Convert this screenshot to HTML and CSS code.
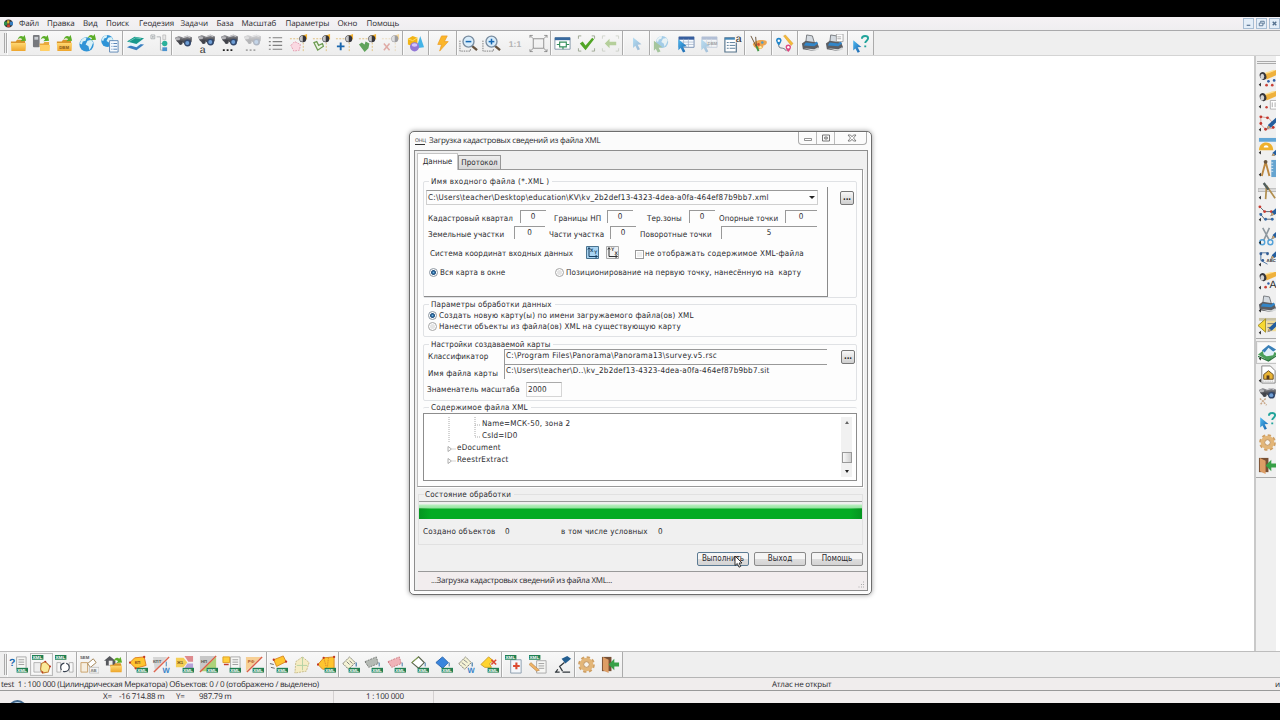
FILE: index.html
```html
<!DOCTYPE html>
<html lang="ru">
<head>
<meta charset="utf-8">
<title>Загрузка кадастровых сведений</title>
<link rel="stylesheet" href="styles.css">
</head>
<body>
<svg class="defs" width="0" height="0">
  <defs>
    <linearGradient id="gold" x1="0" y1="0" x2="0" y2="1"><stop offset="0" stop-color="#ffd873"/><stop offset="1" stop-color="#eda52b"/></linearGradient>
    <linearGradient id="blue" x1="0" y1="0" x2="1" y2="1"><stop offset="0" stop-color="#4db9f2"/><stop offset="1" stop-color="#155da6"/></linearGradient>
    <linearGradient id="dark" x1="0" y1="0" x2="0" y2="1"><stop offset="0" stop-color="#a5a5a9"/><stop offset=".45" stop-color="#55565c"/><stop offset="1" stop-color="#2c2d34"/></linearGradient>
  </defs>
  <symbol id="mk" viewBox="0 0 20 20"><path d="M3 14.500v4L.8 16.500z" fill="#222"/></symbol>
  <symbol id="folderbase" viewBox="0 0 20 20"><path d="M2 8h5l1.500-2H16l1 2v3H2z" fill="#d9952a"/><path d="M2 9.500h16l-.6 8.500H2.500z" fill="url(#gold)"/></symbol>
  <symbol id="garrow" viewBox="0 0 20 20"><path d="M9 6c1-4 4-5 6-3l1.500-2L18 7l-6 .5 1.800-2C12.500 4 11 4 9 6z" fill="#5cae28"/></symbol>
  <symbol id="folder" viewBox="0 0 20 20"><use href="#folderbase"/><use href="#garrow"/></symbol>
  <symbol id="folderphone" viewBox="0 0 20 20"><rect x="1" y="1" width="7" height="13" rx="1" fill="#77797d"/><path d="M2.500 3h4v3h-4z" fill="#c9cdd2"/><path d="M8 10h4l1-1.500h5V18H9z" fill="#e9a93a"/><path d="M8 11.500h11L18.500 18H9z" fill="#ffcf66"/><use href="#garrow"/></symbol>
  <symbol id="folderdbm" viewBox="0 0 20 20"><use href="#folder"/><text x="4.500" y="16" class="it" fill="#835414">DBM</text></symbol>
  <symbol id="globe" viewBox="0 0 20 20"><circle cx="9" cy="11" r="7.500" fill="#2f94d7"/><path d="M3 7c3-4 5-3 6-3l-1 3-3 1-1 3-2-1zM10 7l4-1 2 3-2 5-2 3-1-4-3-2z" fill="#d8f1f7"/></symbol>
  <symbol id="globearrow" viewBox="0 0 20 20"><use href="#globe"/><use href="#garrow" x="1" y="-1"/></symbol>
  <symbol id="globelist" viewBox="0 0 20 20"><g transform="translate(-1 -2) scale(.85)"><use href="#globe" width="20" height="20"/></g><path d="M9 7h9v12H9z" fill="#f7fbff" stroke="#6089b5"/><path d="M11 10h1m1 0h4m-6 3h1m1 0h4m-6 3h1m1 0h4" stroke="#5180b5"/></symbol>
  <symbol id="layers" viewBox="0 0 20 20"><path d="M1 14l8-4 10 1-8 6z" fill="#3a7fc0"/><path d="M1 11l8-4 10 1-8 6z" fill="#e8f4fb"/><path d="M1 8l8-5 10 1.500-8 6z" fill="#18988c"/><path d="M3 8l7-4 6 1" stroke="#66c6b5" fill="none"/></symbol>
  <symbol id="tree" viewBox="0 0 20 20"><path d="M1 1h4v4H1zM2 3h2M3 2v2M7 3h4v14h4M11 10h4" stroke="#9ca3a6" fill="none" stroke-width=".8"/><path d="M13.500 1h3v5h-3z" fill="#e8e8e8" stroke="#aaa" stroke-width=".6"/><circle cx="15.500" cy="10" r="2.800" fill="#2ab19b"/><path d="M13 14h5v4h-5z" fill="#4b93ce"/></symbol>
  <symbol id="binoc" viewBox="0 0 20 20"><path d="M1 4l4-2 4 1.500L14 1.500l5 2-.5 5-5 4-4.500-4-2 2.500L3 8z" fill="url(#dark)"/><ellipse cx="4" cy="5" rx="2.500" ry="1.600" fill="#b4b4b8"/><path d="M9 4l5-1.500 3 1" stroke="#d7d7da" fill="none"/><circle cx="7" cy="9.300" r="2.200" fill="#41434a"/><circle cx="14.300" cy="9.500" r="3.600" fill="#33496d"/><circle cx="14" cy="9.500" r="2.100" fill="#6f9fd6"/></symbol>
  <symbol id="binoca" viewBox="0 0 20 20"><use href="#binoc" y="-1"/><text x="3" y="19.500" class="it big" fill="#333">a</text></symbol>
  <symbol id="binocd" viewBox="0 0 20 20"><use href="#binoc" y="-1"/><path d="M3 17h2m2 0h2m2 0h2" stroke="#222" stroke-width="1.800"/></symbol>
  <symbol id="list" viewBox="0 0 20 20"><path d="M3 4h2m2 0h10M3 8h2m2 0h10M3 12h2m2 0h10M3 16h2m2 0h10" stroke="#808080" stroke-width="1.200"/></symbol>
  <symbol id="sel" viewBox="0 0 20 20"><path d="M1 5h10M15 9v10" stroke="#dfbf7a" stroke-dasharray="2 1.500" fill="none"/><path d="M13 2l6-2v6z" fill="#f3b334"/><circle cx="14.500" cy="5" r="3.700" fill="#34343a"/><path d="M14.500 1.800a3.200 3.200 0 0 0 0 6.400z" fill="#c5c5c8"/></symbol>
  <symbol id="selpoly" viewBox="0 0 20 20"><use href="#sel"/><path d="M2 12l4-4 6 3-1 6-6 1z" fill="#fad9e2" stroke="#e59fb1" stroke-dasharray="2 1"/></symbol>
  <symbol id="selline" viewBox="0 0 20 20"><use href="#sel"/><path d="M2 9l3-1 2 4 4-2 1 3-6 4z" fill="#eef6e5" stroke="#6c9b52" stroke-width="1.300"/></symbol>
  <symbol id="selplus" viewBox="0 0 20 20"><use href="#sel"/><path d="M2 13h8M6 9v8" stroke="#1a66ad" stroke-width="2"/></symbol>
  <symbol id="selheart" viewBox="0 0 20 20"><use href="#sel"/><path d="M1 11l3-2 3 2 1-3 4 2-1 5-4 4z" fill="#60a35c"/></symbol>
  <symbol id="selx" viewBox="0 0 20 20"><g opacity=".45"><use href="#sel"/></g><path d="M3 10l6 7m0-7l-6 7" stroke="#dfaaa5" stroke-width="1.600"/></symbol>
  <symbol id="shapes" viewBox="0 0 20 20"><path d="M2 5l5-3 5 2v7l-5 2-5-2z" fill="#f1b416"/><path d="M2 5l5 2 5-3" stroke="#ffdf66" fill="none"/><path d="M15 2l4 12-8 1z" fill="#44b4e7"/><circle cx="9" cy="13.500" r="4.800" fill="#9277d6"/><ellipse cx="9" cy="11.500" rx="3" ry="1.800" fill="#d3c5ff"/></symbol>
  <symbol id="bolt" viewBox="0 0 20 20"><path d="M9 2h6l-3 6h4L7 18l2-7H5z" fill="#fbb62a" stroke="#eb981c" stroke-width=".7"/></symbol>
  <symbol id="mag" viewBox="0 0 20 20"><path d="M1 7v11h11v-3" fill="none" stroke="#777" stroke-dasharray="1.500 1"/><path d="M13 12l6 5" stroke="#66533f" stroke-width="2.500"/><circle cx="10" cy="8" r="5.800" fill="#d9edfb" stroke="#7a8da0" stroke-width="1.400"/><path d="M7 8h6" stroke="#1769b3" stroke-width="1.600"/></symbol>
  <symbol id="magin" viewBox="0 0 20 20"><use href="#mag"/><path d="M10 5v6" stroke="#1769b3" stroke-width="1.600"/></symbol>
  <symbol id="one" viewBox="0 0 20 20"><text x="3" y="13.500" class="it one" fill="#b3b3b3">1:1</text></symbol>
  <symbol id="fit" viewBox="0 0 20 20"><path d="M4.500 5h11v10h-11zM1 1.500L4.500 5M19 1.500L15.500 5M1 18.500L4.500 15M19 18.500L15.500 15M1 4V1.500h3M16 1.500h3V4M1 16v2.500h3M16 18.500h3V16" stroke="#858585" fill="none" stroke-width=".9"/></symbol>
  <symbol id="win" viewBox="0 0 20 20"><path d="M2 4h16v12H2z" fill="#fff" stroke="#8497a9"/><path d="M2 3.500h16v3H2z" fill="#386a9f"/><path d="M7 8.500h7v5H7zM4 11h3m7 0h3M10.500 13.500v2.500" stroke="#348e5c" fill="none" stroke-width="1.200"/></symbol>
  <symbol id="corners" viewBox="0 0 20 20"><path d="M1.500 5V2h3M15.500 2h3v3M1.500 15v3h3M15.500 18h3v-3" stroke="#9da792" fill="none"/></symbol>
  <symbol id="check" viewBox="0 0 20 20"><use href="#corners"/><path d="M3 10l3-2 3 4 7-8 2 1.500L9 17z" fill="#51a526"/></symbol>
  <symbol id="back" viewBox="0 0 20 20"><use href="#corners" opacity=".4"/><path d="M4 10l5-5v3.200h7v3.600H9V15z" fill="#b5cf9b"/></symbol>
  <symbol id="cursor" viewBox="0 0 20 20"><path d="M3 2l11 9-5 .5 3 6-3 1.500-3-6-3 3z" fill="url(#blue)"/></symbol>
  <symbol id="curpale" viewBox="0 0 20 20"><g transform="translate(4 2) scale(.8)"><use href="#cursor" width="20" height="20" opacity=".4"/></g></symbol>
  <symbol id="curglobe" viewBox="0 0 20 20"><g opacity=".4" transform="translate(3 -1) scale(.85)"><use href="#globe" width="20" height="20"/></g><path d="M2 7l9 7-4 .5 2 4-3 1-2-4-2 2z" fill="#a5c59d"/></symbol>
  <symbol id="table" viewBox="0 0 20 20"><path d="M3 3h16v11H3z" fill="#f9fcff" stroke="#7790b4"/><path d="M3 3h16v3H3z" fill="#375e9e"/><path d="M3 8.500h16M3 11h16M8 5v9m5-9v9" stroke="#9baac2" stroke-width=".7"/></symbol>
  <symbol id="curtable" viewBox="0 0 20 20"><use href="#table"/><g transform="translate(0 4) scale(.82)"><use href="#cursor" width="20" height="20"/></g></symbol>
  <symbol id="curdbm" viewBox="0 0 20 20"><g opacity=".35"><use href="#curtable"/><text x="9" y="12" class="it">DBM</text></g></symbol>
  <symbol id="lista" viewBox="0 0 20 20"><path d="M2 4h12v15H2z" fill="#fff" stroke="#54728a" stroke-width="1.200"/><path d="M2 5h12" stroke="#4387b8" stroke-width="2"/><path d="M4 9h2m1 0h6m-9 3h2m1 0h6m-9 3h2m1 0h6" stroke="#557b98"/><path d="M12.500 0h7v9h-7z" fill="#f2f2f2"/><text x="13.500" y="8" class="it big" fill="#222">a</text></symbol>
  <symbol id="palette" viewBox="0 0 20 20"><path d="M4 11c1-4 8-6 14-4 2 2 0 5-3 5 1 5-8 6-11-1z" fill="#eda650"/><circle cx="10" cy="11" r="1.400" fill="#d14b31"/><circle cx="14" cy="9" r="1.300" fill="#4c9bcb"/><circle cx="12" cy="14" r="1.300" fill="#fff1a0"/><path d="M2 2l6 12M7 3l1 11" stroke="#685136" stroke-width="1"/><path d="M8 13l2 5" stroke="#419744" stroke-width="2"/></symbol>
  <symbol id="route" viewBox="0 0 20 20"><path d="M9 2l2-1 8 9-2 2z" fill="#f4bb38" stroke="#d7972b" stroke-width=".5"/><path d="M4 10c-1 8 5 2 8 8" fill="none" stroke="#67717c"/><path d="M4 12C-.5 7 1 4 4 4s4.500 3 0 8z" fill="#2386c9"/><circle cx="4" cy="7" r="1.300" fill="#fff"/><path d="M14 19c-4.500-5-3-8 0-8s4.500 3 0 8z" fill="#dc4a82"/><circle cx="14" cy="14" r="1.300" fill="#fff"/></symbol>
  <symbol id="printer" viewBox="0 0 20 20"><path d="M6 1l6 1 2 7H5z" fill="#d4dae0" stroke="#5c6064" stroke-width=".8"/><path d="M1 10l4-3 12 2 2 5-5 4-12-2z" fill="#5c5e63"/><path d="M5 9l9 1 2.500-2 1.500 2-4 3-11-1z" fill="#3286c9"/><path d="M3 15l11 1 4-2 1 2-5 2z" fill="#d6d9da"/></symbol>
  <symbol id="printer2" viewBox="0 0 20 20"><use href="#printer"/><path d="M12 0h7v8h-7z" fill="#fff" stroke="#888" stroke-width=".7"/><path d="M13 3h4m-4 2h4" stroke="#888" stroke-width=".7"/></symbol>
  <symbol id="help" viewBox="0 0 20 20"><g transform="translate(0 5) scale(.78)"><use href="#cursor" width="20" height="20"/></g><path d="M11.500 5c0-4 6.500-3.500 6.500-.5 0 2.500-3 2.500-3 5M15 12v2" stroke="#22a49b" fill="none" stroke-width="2"/></symbol>

  <symbol id="tag" viewBox="0 0 20 20"><path d="M8 13.500h12v5H8z" fill="#218052"/><text x="8.600" y="17.700" class="it tagt" fill="#fff">XML</text></symbol>
  <symbol id="tagtop" viewBox="0 0 20 20"><path d="M0 0h12v5H0z" fill="#218052"/><text x=".6" y="4.200" class="it tagt" fill="#fff">XML</text></symbol>
  <symbol id="page" viewBox="0 0 20 20"><path d="M8 2h10v13H8z" fill="#f6f6f4" stroke="#aaa"/><path d="M10 5h6m-6 2.500h6m-6 2.500h6" stroke="#888" stroke-width=".8"/></symbol>
  <symbol id="xq" viewBox="0 0 20 20"><use href="#page"/><text x="0" y="12" class="it q" fill="#1b69ae">?</text><use href="#tag"/></symbol>
  <symbol id="xpoly" viewBox="0 0 20 20"><path d="M2 8h7v10H2z" fill="#eee" stroke="#999" stroke-width=".7"/><path d="M10 9l4-2 5 5-2 6-6 1-2-4z" fill="#fae998" stroke="#bf7d34" stroke-width="1.100"/><g fill="#b92f23"><circle cx="14" cy="7" r="1"/><circle cx="19" cy="12" r="1"/><circle cx="11" cy="18" r="1"/></g><use href="#tagtop"/></symbol>
  <symbol id="xsync" viewBox="0 0 20 20"><use href="#tagtop"/><path d="M2 8h4v10H2zM15 8h4v10h-4z" fill="#f8f8f8" stroke="#999" stroke-width=".7"/><circle cx="10.500" cy="13" r="4.500" fill="#fff" stroke="#384250" stroke-width="1.200" stroke-dasharray="9 2"/></symbol>
  <symbol id="sem" viewBox="0 0 20 20"><text x="0" y="4.500" class="it" fill="#555">SEM</text><path d="M1 8h7v10H1z" fill="#f6eee0" stroke="#c9a16c"/><path d="M8 9l6-5 3 4-6 5z" fill="#fff" stroke="#a18353"/><path d="M10 13h10v6H10z" fill="#f4f4f4" stroke="#aaa" stroke-width=".6"/><text x="11" y="18" class="it" fill="#777">AB</text></symbol>
  <symbol id="homefolder" viewBox="0 0 20 20"><path d="M0 6l6-5 6 5v5H2V6z" fill="#56585d"/><path d="M5 6h4v5H5z" fill="#eee"/><g transform="translate(5 4) scale(.78)"><use href="#folderbase" width="20" height="20"/></g><use href="#garrow" x="1" y="1"/></symbol>
  <symbol id="xkp" viewBox="0 0 20 20"><path d="M1 8l5-5 10-1 2 9-11 3z" fill="#ffc52f" stroke="#de7f20"/><g fill="#c23723"><circle cx="1" cy="8" r="1.200"/><circle cx="16" cy="2" r="1.200"/><circle cx="7" cy="14" r="1.200"/></g><text x="6" y="9" class="it" fill="#83451b">КП</text><use href="#tag"/></symbol>
  <symbol id="kptw" viewBox="0 0 20 20"><path d="M1 2h15L3 16z" fill="#d6d6d6"/><path d="M2 18L18 2" stroke="#df6551" stroke-width="1.500"/><text x="1" y="8" class="it" fill="#555">КПТ</text><path d="M15 7v5" stroke="#4382b7"/><text x="11" y="19" class="it w" fill="#3884ca">W</text></symbol>
  <symbol id="xj" viewBox="0 0 20 20"><path d="M1 3h8l4 5-4 5H1z" fill="#f5cf56"/><path d="M10 1h9v6h-5z" fill="#de8b8e"/><path d="M13 9h6v5h-9z" fill="#b6a3d9"/><text x="2" y="9" class="it" fill="#79571d">Ж1</text><use href="#tag"/></symbol>
  <symbol id="xnp" viewBox="0 0 20 20"><path d="M1 1h16L1 17z" fill="#c8c8c8"/><path d="M18 2v15H2z" fill="#add37a"/><path d="M1 18L18 1" stroke="#db5f46" stroke-width="1.500"/><text x="2" y="8" class="it" fill="#4c5746">НП</text><use href="#tag"/></symbol>
  <symbol id="xdoc" viewBox="0 0 20 20"><use href="#page" x="1"/><path d="M1 2h7v6H1z" fill="#ffcf3d" stroke="#df9f23"/><path d="M2 10h5" stroke="#c53a2b" stroke-width="1.500"/><use href="#tag"/></symbol>
  <symbol id="xrf" viewBox="0 0 20 20"><path d="M1 2h16L1 17z" fill="#f7cf94"/><path d="M2 18L18 2" stroke="#db5f46" stroke-width="1.500"/><text x="3" y="8" class="it" fill="#ae5927">РФ</text><use href="#tag"/></symbol>
  <symbol id="xyel" viewBox="0 0 20 20"><path d="M5 5l10-4 3 6-10 5z" fill="#ffc52f" stroke="#d88a25"/><path d="M1 9l4 1m-3 3l4 1" stroke="#666"/><g fill="#c23723"><circle cx="5" cy="5" r="1.200"/><circle cx="18" cy="7" r="1.200"/></g><use href="#tag"/></symbol>
  <symbol id="palepoly" viewBox="0 0 20 20"><path d="M3 7l7-5 7 6-3 9-12 2z" fill="#f5ecc3" stroke="#c6ba88" stroke-dasharray="2 1"/><path d="M10 2v14m-6-5h11" stroke="#b4d2a4"/></symbol>
  <symbol id="xyel6" viewBox="0 0 20 20"><path d="M1 10l6-7 11-1v12l-12 1z" fill="#ffc52f" stroke="#d88a25"/><path d="M7 3l3 10M12 3l-1 10" stroke="#d1732a" stroke-dasharray="1 1"/><g fill="#c23723"><circle cx="1" cy="10" r="1.200"/><circle cx="18" cy="2" r="1.200"/><circle cx="7" cy="3" r="1.200"/></g><use href="#tag"/></symbol>
  <symbol id="dia" viewBox="0 0 20 20"><path d="M2 9l7-7 6 6-7 7z" fill="#f5f3d5" stroke="#747466" stroke-dasharray="2 .7"/><path d="M16 8v4" stroke="#3975a7" stroke-width="1.200"/></symbol>
  <symbol id="xd1" viewBox="0 0 20 20"><use href="#dia"/><path d="M6 7l3 3m0-4l3 3" stroke="#777"/><use href="#tag"/></symbol>
  <symbol id="xd2" viewBox="0 0 20 20"><path d="M1 7l12-5 2 7-10 4z" fill="#b5bab5" stroke="#747874" stroke-dasharray="2 1"/><path d="M16 8v4" stroke="#3975a7"/><use href="#tag"/></symbol>
  <symbol id="xd3" viewBox="0 0 20 20"><path d="M1 7l12-5 2 7-10 4z" fill="#f0b3b8" stroke="#cd7980" stroke-dasharray="2 1"/><path d="M16 8v4" stroke="#3975a7"/><use href="#tag"/></symbol>
  <symbol id="xd4" viewBox="0 0 20 20"><path d="M2 8l7-6 6 6-6 6z" fill="#fff" stroke="#59634e" stroke-width="1.200"/><path d="M2 8l7-6" stroke="#8aad4c"/><path d="M16 8v4" stroke="#3975a7"/><use href="#tag"/></symbol>
  <symbol id="xd5" viewBox="0 0 20 20"><path d="M2 8l7-6 6 6-6 6z" fill="#3985dd" stroke="#2965ad"/><path d="M16 8v4" stroke="#3975a7"/><use href="#tag"/></symbol>
  <symbol id="xd6" viewBox="0 0 20 20"><use href="#dia"/><path d="M5 8l4 3m-2-6l4 3" stroke="#888"/><text x="11" y="19" class="it w" fill="#3884ca">W</text></symbol>
  <symbol id="xd7" viewBox="0 0 20 20"><path d="M1 10l8-8 5 4-4 3 2 4H5z" fill="#ffd42f" stroke="#cfa025"/><path d="M12 5l5 5m0-5l-5 5" stroke="#dd4530" stroke-width="1.600"/><use href="#tag"/></symbol>
  <symbol id="xmed" viewBox="0 0 20 20"><path d="M6 5h11v14H6z" fill="#f4f7fb" stroke="#8b9dae"/><path d="M12 8v7M8.500 11.500h7" stroke="#dc4b32" stroke-width="2.200"/><use href="#tagtop"/></symbol>
  <symbol id="xpen" viewBox="0 0 20 20"><use href="#page" y="4"/><path d="M2 8l9 8-3 1-8-7z" fill="#efb467" stroke="#a36e35" stroke-width=".5"/><use href="#tagtop"/></symbol>
  <symbol id="micro" viewBox="0 0 20 20"><path d="M9 4l6-3 4 3-6 5z" fill="#245f91"/><path d="M12 8l-5 4 3 5M2 18h5m3 0h8M5 15l-2 3" stroke="#30373c" fill="none" stroke-width="1.300"/></symbol>
  <symbol id="gear" viewBox="0 0 20 20"><circle cx="10" cy="10" r="7.600" fill="none" stroke="#cfa065" stroke-width="2.400" stroke-dasharray="3.400 2.570"/><circle cx="10" cy="10" r="5.200" fill="none" stroke="#e3b678" stroke-width="4"/><circle cx="10" cy="10" r="3" fill="#f6f3ed" stroke="#ba884c"/></symbol>
  <symbol id="exit" viewBox="0 0 20 20"><path d="M1 2h10v15H1z" fill="#765035"/><path d="M2 2l6 3v14l-6-3z" fill="#dd9d65"/><path d="M8 10l6-6v4h5v4h-5v4z" fill="#38a047"/></symbol>

  <symbol id="torch" viewBox="0 0 20 20"><path d="M7 5l12-4 1 5-11 5z" fill="#efb13d"/><path d="M8 4.500l9-3" stroke="#ffe08f" stroke-width="1.500"/><ellipse cx="5.500" cy="7.500" rx="3.400" ry="4.300" transform="rotate(-20 5 8)" fill="#37373c"/><ellipse cx="4.500" cy="8" rx="2" ry="2.900" fill="#d4d4d5"/></symbol>
  <symbol id="torchdots" viewBox="0 0 20 20"><use href="#torch"/><g fill="#c84138"><circle cx="9" cy="17" r="1.400"/><circle cx="15" cy="17" r="1.400"/></g><g fill="#315fa5"><circle cx="11" cy="13" r="1.400"/><circle cx="17" cy="12" r="1.400"/></g></symbol>
  <symbol id="torchpage" viewBox="0 0 20 20"><use href="#torch" y="-1"/><path d="M13 10h8v9h-8z" fill="#fff" stroke="#999" stroke-width=".7"/><path d="M15 12v5m3-5v5" stroke="#aaa"/><circle cx="9" cy="17" r="1.300" fill="#c84138"/></symbol>
  <symbol id="pencil" viewBox="0 0 20 20"><path d="M20 3l-9 8-2 5 5-2 8-8z" fill="#245e9e"/><path d="M9 16l2-4 2 2z" fill="#d4a467"/></symbol>
  <symbol id="editpoly" viewBox="0 0 20 20"><path d="M3 3l8 1 5 6M3 3v8l5 5 9-1" fill="none" stroke="#d69c95"/><g fill="#c4362d"><circle cx="3" cy="3" r="1.500"/><circle cx="10" cy="4" r="1.500"/><circle cx="3" cy="10" r="1.500"/><circle cx="8" cy="16" r="1.500"/><circle cx="16" cy="14" r="1.500"/></g><use href="#pencil"/></symbol>
  <symbol id="protr" viewBox="0 0 20 20"><path d="M1 1h18v4H1z" fill="#62a6d6"/><path d="M1 14c0-11 15-11 15 0z" fill="#eeb12d"/><path d="M6 11c0-3 5-3 5 0z" fill="#fff"/><use href="#pencil" x="5" y="5"/></symbol>
  <symbol id="compass" viewBox="0 0 20 20"><path d="M8 3L4 18M8 3l4 15" stroke="#bc8841" stroke-width="2"/><circle cx="8" cy="3" r="2" fill="#69553c"/><path d="M14 1h5v18h-5z" fill="#66a4d0"/><path d="M14 4h2m-2 3h2m-2 3h2m-2 3h2" stroke="#fff" stroke-width=".7"/></symbol>
  <symbol id="compass2" viewBox="0 0 20 20"><path d="M0 7h20v3H0z" fill="#ddd" stroke="#999" stroke-width=".6"/><path d="M9 4L8 18M9 4l9 13" stroke="#b18e4e" stroke-width="1.800"/><path d="M6 1l5 7" stroke="#525e5c" stroke-width="2.500"/></symbol>
  <symbol id="nodes" viewBox="0 0 20 20"><path d="M2 3l5 5h10M2 10l5 6h9" fill="none" stroke="#586372"/><g fill="#c8392f"><circle cx="2" cy="3" r="1.500"/><circle cx="7" cy="8" r="1.500"/><circle cx="14" cy="8" r="1.500"/></g><g fill="#3469a6"><circle cx="3" cy="11" r="1.500"/><circle cx="8" cy="16" r="1.500"/><circle cx="15" cy="16" r="1.500"/></g><use href="#pencil" x="4" y="-3"/></symbol>
  <symbol id="sciss" viewBox="0 0 20 20"><path d="M5 1l7 13M12 1L6 14" stroke="#8e989f" stroke-width="1.700"/><circle cx="4.500" cy="16" r="2.600" fill="none" stroke="#51a1d8" stroke-width="1.500"/><circle cx="13" cy="16" r="2.600" fill="none" stroke="#51a1d8" stroke-width="1.500"/><use href="#pencil" x="5" y="-3"/></symbol>
  <symbol id="abc" viewBox="0 0 20 20"><path d="M3 4h8M3 4v8l7 4" stroke="#5176a0" fill="none"/><g fill="#305b94"><circle cx="3" cy="5" r="1.500"/><circle cx="10" cy="5" r="1.500"/><circle cx="5" cy="12" r="1.500"/></g><text x="9" y="14" class="it" fill="#333">ABC</text><use href="#pencil" x="4" y="-5"/></symbol>
  <symbol id="torcha" viewBox="0 0 20 20"><use href="#torch" y="-2"/><text x="12" y="17" class="it big" fill="#333">A</text><circle cx="8" cy="16" r="1.400" fill="#c84138"/><circle cx="11" cy="12" r="1.300" fill="#315fa5"/></symbol>
  <symbol id="ytri" viewBox="0 0 20 20"><path d="M1 1h18v3H1z" fill="#c8c2a6"/><path d="M9 4h10v11H9z" fill="#f1dc98"/><path d="M10 7h8m-8 4h8" stroke="#777"/><path d="M0 9l8-7v14z" fill="#f8d831" stroke="#9f8b24"/><use href="#pencil" x="1"/></symbol>
  <symbol id="homemap" viewBox="0 0 20 20"><path d="M0 12l8-6 13 5-10 8z" fill="#4a9e59"/><path d="M0 14l11 5 9-6" fill="none" stroke="#2c7440" stroke-width="1.500"/><path d="M5 8l6-6 7 5-2 6-7 1-3-2z" fill="#e3f0fa"/><path d="M4 8l7-6 8 5-3 2-5-4-4 5z" fill="#3a80b8"/></symbol>
  <symbol id="homepage" viewBox="0 0 20 20"><path d="M4 1h9l5 5v13H4z" fill="#fff" stroke="#838383"/><path d="M6 10l5-4 5 4v5H6z" fill="#eab434" stroke="#684f27"/><path d="M9 11h3v4H9z" fill="#573c20"/><path d="M5 17h12" stroke="#999" stroke-dasharray="1 1"/></symbol>
  <symbol id="binocx" viewBox="0 0 20 20"><use href="#binoc" y="-2"/><path d="M2 11l7 7m-1-7l-6 7" stroke="#c8a788" stroke-width="1.600" stroke-dasharray="2 1"/></symbol>
</svg>

<div class="bar-black top"></div>
<nav class="menubar">
  <svg class="logo" viewBox="0 0 10 10"><circle cx="5" cy="5" r="4.500" fill="#3b3434"/><path d="M0 3h3.500v4H0z" fill="#2f8e4d"/><path d="M3.500 1.500H6V5H3.500z" fill="#e0b92e"/><path d="M6.500 3H10v4H6.500z" fill="#367dc0"/><path d="M3.500 6h3v3h-3z" fill="#d3442f"/></svg>
  <span class="m1">Файл</span><span class="m2">Правка</span><span class="m3">Вид</span><span class="m4">Поиск</span><span class="m5">Геодезия</span><span class="m6">Задачи</span><span class="m7">База</span><span class="m8">Масштаб</span><span class="m9">Параметры</span><span class="m10">Окно</span><span class="m11">Помощь</span>
  <div class="mdi"><i><svg viewBox="0 0 10 10"><path d="M3 7h4" stroke="#54708e" stroke-width="1.300"/></svg></i><i><svg viewBox="0 0 10 10"><path d="M2.500 4.500h4v3h-4zM4 4V2.500h4v3H7" fill="none" stroke="#54708e"/></svg></i><i><svg viewBox="0 0 10 10"><path d="M3 3l4 4m0-4L3 7" stroke="#54708e" stroke-width="1.500"/></svg></i></div>
</nav>
<div class="toolbar main">
  <div class="grip"></div>
  <div class="tg"><svg><use href="#folder"/></svg><svg><use href="#folderphone"/></svg><svg><use href="#folderdbm"/></svg><svg><use href="#globearrow"/></svg><svg><use href="#globelist"/></svg></div>
  <div class="tg"><svg><use href="#layers"/></svg><svg><use href="#tree"/></svg></div>
  <div class="tg"><svg><use href="#binoc"/></svg><svg><use href="#binoca"/></svg><svg><use href="#binocd"/></svg><svg class="off"><use href="#binocd"/></svg><svg><use href="#list"/></svg><svg><use href="#selpoly"/></svg><svg><use href="#selline"/></svg><svg><use href="#selplus"/></svg><svg><use href="#selheart"/></svg><svg><use href="#selx"/></svg></div>
  <div class="tg"><svg><use href="#shapes"/></svg></div>
  <div class="tg"><svg><use href="#bolt"/></svg></div>
  <div class="tg"><svg><use href="#mag"/></svg><svg><use href="#magin"/></svg><svg><use href="#one"/></svg><svg><use href="#fit"/></svg></div>
  <div class="tg"><svg><use href="#win"/></svg><svg><use href="#check"/></svg><svg><use href="#back"/></svg></div>
  <div class="tg"><svg><use href="#curpale"/></svg></div>
  <div class="tg"><svg><use href="#curglobe"/></svg><svg><use href="#curtable"/></svg><svg><use href="#curdbm"/></svg><svg><use href="#lista"/></svg></div>
  <div class="tg"><svg><use href="#palette"/></svg></div>
  <div class="tg"><svg><use href="#route"/></svg></div>
  <div class="tg"><svg><use href="#printer"/></svg><svg><use href="#printer2"/></svg></div>
  <div class="tg"><svg><use href="#help"/></svg></div>
</div>

<div class="middle">
  <main class="desk">
    <section class="dialog">
      <header class="title"><span class="ticon">ОНЦ</span><span class="ttext">Загрузка кадастровых сведений из файла XML</span>
        <div class="wbtns"><i><svg viewBox="0 0 12 10"><path d="M2.500 5.500h7v2h-7z" fill="#fff" stroke="#777" stroke-width=".8"/></svg></i><i><svg viewBox="0 0 12 10"><path d="M2.500 2h7v6h-7zM4.800 4h2.400v2H4.800z" fill="none" stroke="#666" stroke-width=".9"/></svg></i><i class="wide"><svg viewBox="0 0 12 10"><path d="M2 2h2.500L6 3.800 7.500 2H10L7.500 5 10 8H7.500L6 6.200 4.500 8H2l2.500-3z" fill="#fff" stroke="#666" stroke-width=".8"/></svg></i></div>
      </header>
      <div class="client">
        <div class="tabs"><div class="tab on">Данные</div><div class="tab">Протокол</div></div>
        <div class="panel">
          <div class="group g1">
            <div class="legend">Имя входного файла (*.XML )</div>
            <div class="split">
              <div class="pane">
                <div class="combo"><span class="path1">C:\Users\teacher\Desktop\education\KV\kv_2b2def13-4323-4dea-a0fa-464ef87b9bb7.xml</span><b class="tri"></b></div>
                <div class="row ra"><label>Кадастровый квартал</label><output>0</output><label>Границы НП</label><output>0</output><label>Тер.зоны</label><output>0</output><label>Опорные точки</label><output>0</output></div>
                <div class="row rb"><label>Земельные участки</label><output>0</output><label>Части участка</label><output>0</output><label>Поворотные точки</label><output>5</output></div>
                <div class="row rc"><label>Система координат входных данных</label>
                  <svg class="xy on" viewBox="0 0 13 13"><path d="M.5.5h12v12H.5z" fill="#a9d4f2" stroke="#4b7490"/><path d="M3 2v8.500h8M1.800 3.500L3 1.500l1.200 2M9.500 9.300l2 1.200-2 1.200" fill="none" stroke="#173f61"/><text x="4" y="6" class="it s" fill="#173f61">X</text><text x="8" y="8" class="it s" fill="#173f61">Y</text></svg>
                  <svg class="xy" viewBox="0 0 13 13"><path d="M.5.5h12v12H.5z" fill="#f4f4f4" stroke="#aaa"/><path d="M3 2v8.500h8M1.800 3.500L3 1.500l1.200 2M9.500 9.300l2 1.200-2 1.200" fill="none" stroke="#333"/><text x="5" y="4.500" class="it s" fill="#333">Y</text><text x="8.500" y="8.500" class="it s" fill="#333">X</text></svg>
                  <span class="cb"></span><label class="nocontent">не отображать содержимое XML-файла</label></div>
                <div class="row rd"><span class="radio on"></span><label>Вся карта в окне</label><span class="radio"></span><label class="pos">Позиционирование на первую точку, нанесённую на&nbsp; карту</label></div>
              </div>
              <button class="dots">...</button>
            </div>
          </div>
          <div class="group g2">
            <div class="legend">Параметры обработки данных</div>
            <div class="opt"><span class="radio on"></span><label>Создать новую карту(ы) по имени загружаемого файла(ов) XML</label></div>
            <div class="opt"><span class="radio"></span><label>Нанести объекты из файла(ов) XML на существующую карту</label></div>
          </div>
          <div class="group g3">
            <div class="legend">Настройки создаваемой карты</div>
            <div class="frow f1"><label>Классификатор</label><span class="inp"><span class="path2">C:\Program Files\Panorama\Panorama13\survey.v5.rsc</span></span><button class="dots">...</button></div>
            <div class="frow f2"><label>Имя файла карты</label><span class="inp"><span class="path3">C:\Users\teacher\D..\kv_2b2def13-4323-4dea-a0fa-464ef87b9bb7.sit</span></span></div>
            <div class="frow f3"><label>Знаменатель масштаба</label><span class="inp sc">2000</span></div>
          </div>
          <div class="group g4">
            <div class="legend">Содержимое файла XML</div>
            <div class="treebox">
              <svg class="lines" viewBox="0 0 32 56"><path d="M24.500 3v25M50.500 3v20M50.500 11h6M50.500 23h6M28 35h4M28 47h4" stroke="#aaa" stroke-dasharray="1 1" fill="none"/><path d="M23.500 32.500l3.500 2.500-3.500 2.500zM23.500 44.500l3.500 2.500-3.500 2.500z" fill="#fff" stroke="#999" stroke-width=".8"/></svg>
              <div class="items"><p class="deep">Name=МСК-50, зона 2</p><p class="deep">CsId=ID0</p><p>eDocument</p><p>ReestrExtract</p></div>
              <div class="scroll"><b class="tri up"></b><i></i><b class="tri"></b></div>
            </div>
          </div>
        </div>
        <div class="state">
          <div class="legend">Состояние обработки</div>
          <div class="progress"></div>
          <div class="counts"><label>Создано объектов</label><b>0</b><label>в том числе условных</label><b>0</b></div>
        </div>
        <div class="actions"><button class="hot">Выполнить</button><button>Выход</button><button>Помощь</button>
          <svg class="mouse" viewBox="0 0 9 13"><path d="M1 1v9.500l2.300-2 1.700 3.700 1.700-.8L5.100 8H8z" fill="#fff" stroke="#222" stroke-width=".9"/></svg></div>
        <footer class="dstatus"><span>...Загрузка кадастровых сведений из файла XML...</span><svg class="size" viewBox="0 0 8 8"><path d="M6 1h1M4 3.500h1m1 0h1M1.500 6h1M4 6h1m1 0h1" stroke="#aaa"/></svg></footer>
      </div>
    </section>
  </main>
  <aside class="side">
    <div class="hgrip"></div>
    <div class="sg first"><svg><use href="#torchdots"/><use href="#mk"/></svg><svg><use href="#torchpage"/><use href="#mk"/></svg><svg><use href="#editpoly"/><use href="#mk"/></svg><svg><use href="#protr"/><use href="#mk"/></svg><svg><use href="#compass"/><use href="#mk"/></svg><svg><use href="#compass2"/><use href="#mk"/></svg><svg><use href="#nodes"/><use href="#mk"/></svg><svg><use href="#sciss"/><use href="#mk"/></svg><svg><use href="#abc"/><use href="#mk"/></svg><svg><use href="#torcha"/><use href="#mk"/></svg><svg><use href="#printer"/><use href="#mk"/></svg><svg><use href="#ytri"/><use href="#mk"/></svg></div>
    <div class="sg second"><svg class="sunk"><use href="#homemap"/><use href="#mk"/></svg><svg><use href="#homepage"/><use href="#mk"/></svg><svg><use href="#binocx"/></svg><svg><use href="#help"/></svg><svg><use href="#gear"/></svg><svg><use href="#exit"/></svg></div>
  </aside>
  <div class="edge"></div>
</div>

<div class="toolbar lower">
  <div class="grip"></div>
  <div class="tg"><svg><use href="#xq"/></svg><svg class="pressed"><use href="#xpoly"/></svg><svg><use href="#xsync"/></svg></div>
  <div class="tg"><svg><use href="#sem"/></svg><svg><use href="#homefolder"/></svg></div>
  <div class="tg"><svg><use href="#xkp"/></svg><svg><use href="#kptw"/></svg><svg><use href="#xj"/></svg><svg><use href="#xnp"/></svg><svg><use href="#xdoc"/></svg><svg><use href="#xrf"/></svg></div>
  <div class="tg"><svg><use href="#xyel"/></svg><svg><use href="#palepoly"/></svg><svg><use href="#xyel6"/></svg></div>
  <div class="tg"><svg><use href="#xd1"/></svg><svg><use href="#xd2"/></svg><svg><use href="#xd3"/></svg><svg><use href="#xd4"/></svg><svg><use href="#xd5"/></svg><svg><use href="#xd6"/></svg><svg><use href="#xd7"/></svg></div>
  <div class="tg"><svg><use href="#xmed"/></svg><svg><use href="#xpen"/></svg><svg><use href="#micro"/></svg></div>
  <div class="tg"><svg><use href="#gear"/></svg><svg><use href="#exit"/></svg></div>
</div>
<div class="status s1"><span class="info">test&nbsp; 1 : 100 000 (Цилиндрическая Меркатора) Объектов: 0 / 0 (отображено / выделено)</span><span class="atlas">Атлас не открыт</span><span class="cut">и</span></div>
<div class="status s2"><span class="orb"></span><span>X=</span><span>-16 714.88 m</span><span>Y=</span><span>987.79 m</span><span class="scale">1 : 100 000</span></div>
<div class="bar-black bottom"></div>
</body>
</html>
```
FILE: styles.css
```css
* { box-sizing: border-box; }
body {
  margin: 0; width: 1280px; height: 720px; overflow: hidden;
  display: flex; flex-direction: column; background: #fff; color: #2a2a2e;
  font: 8px/10px "Open Sans", "Noto Sans", sans-serif;
  text-rendering: geometricPrecision;
}
svg { display: block; overflow: visible; }
.defs { position: absolute; overflow: hidden; }
.it { font: bold 4.5px "Liberation Sans", Arial, sans-serif; letter-spacing: 0; }
.it.tagt { font-size: 4.8px; }
.it.big { font: 11px "Liberation Sans", Arial, sans-serif; }
.it.one { font-size: 9px; }
.it.q { font-size: 11px; }
.it.w { font-size: 8px; }
.it.s { font-size: 5px; }
.bar-black { background: #000; flex: none; }
.bar-black.top { height: 17px; }
.bar-black.bottom { height: 17px; }

.menubar { height: 14px; flex: none; display: flex; align-items: center; background: linear-gradient(#f5f2f5, #efeef0); border-bottom: 1px solid #a9a9ab; padding-left: 4px; white-space: nowrap; letter-spacing: -.12px; }
.logo { width: 9px; height: 9px; margin-right: 6px; }
.menubar span { flex: none; }
.m1 { width: 28px; } .m2 { width: 36px; } .m3 { width: 23px; } .m4 { width: 33px; } .m5 { width: 41.5px; } .m6 { width: 36px; }
.m7 { width: 25px; } .m8 { width: 44px; } .m9 { width: 52px; } .m10 { width: 29px; } .m11 { width: 34px; }
.mdi { margin-left: auto; display: flex; gap: 2px; width: 37px; flex: none; overflow: hidden; }
.mdi i { width: 11px; height: 11px; border: 1px solid #a7bdd3; background: #e4eef8; flex: none; }

.toolbar { display: grid; background: #efefef; flex: none; border-bottom: 1px solid #d4d4d4; }
.toolbar.main { height: 25px; grid-template-columns: 7px 116px 49px 231px 26px 28px 94px 72px 27px 95px 27px 26px 50px 26px; }
.toolbar.lower { height: 27px; border-top: 1px solid #bdbdbd; border-bottom: 1px solid #b5b5b5; grid-template-columns: 7px 70px 50px 140px 72px 163px 73px 48px; }
.grip { border-left: 1px solid #aaa; border-right: 1px solid #aaa; width: 3px; margin: 2px 0 2px 4px; }
.tg { display: flex; justify-content: space-around; align-items: center; border-right: 1px solid #ababab; box-shadow: inset 1px 0 #fbfbfb; background: linear-gradient(#f8f8f8, #ededed); }
.tg svg { width: 19px; height: 19px; flex: none; }
.off { opacity: .35; }
.pressed { outline: 1px solid #bbb; outline-offset: 1px; background: #f9f9f9; }

.middle { flex: 1; display: flex; min-height: 0; }
.desk { width: 1254px; background: #fff; padding: 75px 0 0 409px; }
.side { width: 22px; background: #f0f0f0; border-left: 2px solid #c9c9c9; overflow: hidden; }
.edge { width: 4px; background: #fff; }
.hgrip { height: 3px; margin: 5px 0 3px 1px; border-top: 1px solid #aaa; border-bottom: 1px solid #aaa; }
.sg { display: flex; flex-direction: column; justify-content: space-around; padding-left: 2px; border-bottom: 1px solid #aaa; }
.sg svg { width: 19px; height: 19px; flex: none; }
.first { height: 272px; } .second { height: 139px; padding-top: 2px; }
.sunk { background: #fafafa; outline: 1px solid #c4c4c4; outline-offset: 1px; }

.dialog { width: 463px; height: 464px; border: 1px solid #6d6d6d; border-radius: 5px; background: #fbfbfb; box-shadow: 0 0 5px #9a9a9a, inset 0 0 0 1px #fff; padding: 0 3px 3px 4px; font: 8px/10px "DejaVu Sans Condensed", "DejaVu Sans", sans-serif; letter-spacing: .07px; white-space: nowrap; display: flex; flex-direction: column; }
.title { height: 18px; display: flex; align-items: center; font: 8px/10px "Open Sans", "Noto Sans", sans-serif; letter-spacing: -.22px; flex: none; }
.ticon { font-size: 5px; line-height: 6px; width: 10px; text-align: center; border-bottom: 1px solid #333; margin: 0 4px 0 1px; }
.wbtns { margin-left: auto; margin-right: 1px; align-self: flex-start; display: flex; border: 1px solid #aaa; border-top: 0; border-radius: 0 0 4px 4px; height: 13px; }
.wbtns i { width: 18px; padding: 1px 3px; border-right: 1px solid #bbb; }
.wbtns i svg { height: 10px; width: 12px; }
.wbtns .wide { width: 31px; border: 0; padding-left: 11px; }
.client { flex: 1; border: 1px solid #8d8d8d; background: #f0f0f0; display: flex; flex-direction: column; min-height: 0; }
.tabs { display: flex; align-items: flex-end; height: 18px; padding-left: 2px; flex: none; }
.tab { width: 43px; height: 14px; border: 1px solid #979797; border-bottom: 0; background: linear-gradient(#ededed, #d8d8d8); text-align: center; line-height: 14px; letter-spacing: 0; }
.tab.on { width: 41px; height: 17px; background: #fff; border-color: #c4c4c4; line-height: 15px; margin-bottom: -1px; position: relative; }
.panel { margin: 0 4px 0 2px; height: 318px; flex: none; background: #fdfdfd; border: 1px solid #999; border-left-color: #bbb; box-shadow: 1px 1px #fff; padding: 11px 4px 0 5px; }
.group { border: 1px solid #e0e2e5; border-radius: 2px; width: 434px; }
.legend { width: fit-content; height: 12px; margin: -7px 0 0 5px; padding: 0 3px 0 2px; line-height: 13px; background: #fdfdfd; }
.g1 { height: 117px; margin-bottom: 6px; }
.g1 .legend { letter-spacing: .3px; }
.split { display: flex; align-items: flex-start; }
.pane { width: 404px; height: 110px; border-right: 1px solid #8b8b8b; border-bottom: 1px solid #8b8b8b; padding: 3px 0 0 2px; }
.combo { width: 392px; height: 15px; border: 1px solid #cfcfcf; border-top-color: #999; display: flex; align-items: center; justify-content: space-between; padding: 0 2px 0 1px; }
.path1 { letter-spacing: .23px; } .path2 { letter-spacing: .34px; } .path3 { letter-spacing: .25px; }
.tri { border: 3px solid transparent; border-top: 3px solid #222; border-bottom: 0; width: 0; height: 0; }
.tri.up { border-top: 0; border-bottom: 3px solid #666; }
.dots { width: 14px; height: 14px; padding: 0; margin-left: 12px; margin-top: 4px; border: 1px solid #777; border-radius: 2px; background: linear-gradient(#f7f7f7, #cfcfcf); font: bold 8px/8px "DejaVu Sans Condensed", sans-serif; color: #222; flex: none; }
.row { display: grid; padding-left: 2px; }
.row output { height: 13px; border-top: 1px solid #999; border-left: 1px solid #999; text-align: center; line-height: 12px; padding-right: 1px; }
.row label { line-height: 10px; }
.ra { margin-top: 5px; height: 16px; grid-template-columns: 92px 34px 53px 40px 42px 30px 66px 32px; }
.rb { height: 16px; grid-template-columns: 86px 35px 61px 30px 81px 96px; }
.ra label, .rb label { padding-top: 4px; }
.ra output:nth-of-type(1) { margin-right: 8px; }
.ra output:nth-of-type(2) { margin-right: 14px; }
.ra output:nth-of-type(3) { margin-right: 4px; }
.rb output:nth-of-type(1), .rb output:nth-of-type(2) { margin-right: 4px; }
.rc { margin-top: 3px; height: 18px; grid-template-columns: 156px 20px 29px 10px auto; padding-left: 4px; align-items: center; }
.xy { width: 13px; height: 13px; margin-top: -3px; }
.cb { width: 9px; height: 9px; border: 1px solid #999; background: #eee; box-shadow: inset 0 0 0 1px #fff; }
.nocontent { letter-spacing: .22px; }
.rd { margin-top: 1px; height: 17px; grid-template-columns: 11px 115px 11px auto; align-items: center; padding-left: 3px; }
.pos { letter-spacing: .14px; }
.radio { width: 9px; height: 9px; border: 1px solid #aaa; border-radius: 50%; background: #e4e4e4; box-shadow: inset 0 0 0 1px #fff; flex: none; }
.radio.on { background: radial-gradient(#6db8e8 0, #1c4e80 35%, #1c4e80 45%, #dfe7ee 60%); border-color: #8f99a3; }
.g2 { height: 33px; margin-bottom: 7px; letter-spacing: .17px; }
.opt { display: flex; align-items: center; height: 11px; padding-left: 4px; gap: 2px; }
.g3 { height: 57px; margin-bottom: 6px; }
.frow { display: flex; padding-left: 4px; height: 15px; }
.frow label { width: 76px; padding-top: 2px; }
.frow .inp { border-top: 1px solid #999; border-left: 1px solid #999; width: 323px; padding-left: 1px; line-height: 12px; }
.frow .dots { margin: 1px 0 0 14px; }
.f1 { margin-top: -1px; } .f1 label { padding-top: 3px; }
.f2 label { padding-top: 5px; letter-spacing: .2px; }
.f3 { padding-left: 3px; margin-top: 3px; height: 15px; }
.f3 label { width: 99px; padding-top: 3px; letter-spacing: .12px; }
.frow .sc { width: 36px; border: 1px solid #d5d5d5; border-top-color: #aaa; line-height: 13px; }
.g4 { border-bottom: 0; border-left: 0; border-right: 0; height: 75px; }
.g4 .legend { margin-left: 6px; letter-spacing: .2px; }
.treebox { height: 68px; width: 434px; border: 1px solid #8d8d8d; background: #fff; display: flex; padding-right: 4px; }
.lines { width: 33px; height: 56px; flex: none; }
.items { flex: 1; padding-top: 4px; letter-spacing: .22px; }
.items p { margin: 0; height: 12px; line-height: 12px; }
.items .deep { padding-left: 25px; }
.scroll { width: 11px; height: 60px; margin-top: 3px; background: #f1f1f1; display: flex; flex-direction: column; align-items: center; padding: 4px 0; }
.scroll i { width: 10px; height: 11px; margin-top: auto; margin-bottom: 7px; border: 1px solid #999; background: linear-gradient(90deg, #f8f8f8, #cfcfcf); }
.scroll .tri { border-left-width: 2px; border-right-width: 2px; }
.state { height: 51px; flex: none; margin: 7px 4px 0 3px; border: 1px solid #e1e1e1; }
.state .legend { background: #f0f0f0; margin-left: 5px; padding-left: 1px; letter-spacing: .2px; }
.progress { height: 18px; margin-top: 1px; border-top: 1px solid #9b9b9b; background: linear-gradient(90deg, #06751a66, #06751a00 12px, #06751a00 431px, #06751a66) 0 6px no-repeat, linear-gradient(#f0f0f0 2px, #b7f0bf 3px, #97e3a2 6px, #04ab24 7px, #04ab24); }
.counts { display: grid; grid-template-columns: 82px 56px 97px auto; padding: 8px 0 0 4px; letter-spacing: .18px; }
.counts b { font-weight: normal; }
.actions { display: flex; justify-content: flex-end; gap: 5px; height: 26px; padding: 7px 4px 0 0; position: relative; flex: none; letter-spacing: 0; }
.actions button { width: 52px; height: 14px; padding: 0; border: 1px solid #8a8a8a; border-radius: 2px; background: linear-gradient(#f5f5f5 50%, #dedede 50%, #d3d3d3); font: inherit; line-height: 10px; color: inherit; text-align: center; }
.actions .hot { border-color: #5c7b93; }
.mouse { position: absolute; width: 9px; height: 13px; left: 319px; top: 10px; }
.dstatus { flex: 1; margin: 0 0 0 3px; background: #f2edee; border-top: 1px solid #999; display: flex; justify-content: space-between; align-items: center; padding: 0 2px 1px 13px; font: 8px/10px "Open Sans", "Noto Sans", sans-serif; letter-spacing: -.25px; }
.size { width: 8px; height: 8px; align-self: flex-end; }

.status { flex: none; background: #f0eded; display: flex; align-items: center; white-space: nowrap; overflow: hidden; letter-spacing: -.24px; }
.s1 { height: 13px; border-bottom: 1px solid #999; padding: 2px 0 0 1px; }
.s1 .info { width: 771px; }
.s1 .cut { margin-left: auto; width: 5px; }
.s2 { height: 12px; padding-left: 8px; display: grid; grid-template-columns: 95px 16px 57px 23px 134px 101px; grid-template-rows: 12px; background: #f1eeee; }
.orb { width: 19px; height: 19px; border-radius: 50%; border: 2px solid #41688d; background: #b9cfe2; align-self: start; margin-top: 9px; }
.scale { border-left: 1px solid #d4d0d0; border-right: 1px solid #d4d0d0; height: 12px; padding-left: 32px; line-height: 12px; }
```
